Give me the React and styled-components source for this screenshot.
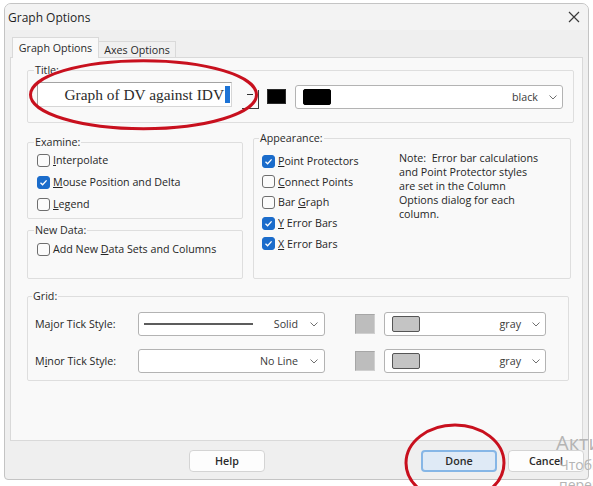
import styled, { createGlobalStyle } from 'styled-components';

const UI = '"Open Sans", "Noto Sans", sans-serif';

const GlobalStyle = createGlobalStyle`
  body {
    margin: 0;
    background: #fff;
  }
`;

function Chevron() {
  return (
    <ChevronSvg width='8' height='5' viewBox='0 0 8 5'>
      <polyline points='0.5,0.5 4,4 7.5,0.5' fill='none' stroke='#707070' strokeWidth='1' />
    </ChevronSvg>
  );
}

function Check({ label, hotkey, checked, rest, compact }) {
  return (
    <CheckRow $compact={compact}>
      <Box $checked={checked}>
        {checked && (
          <svg width='11' height='11' viewBox='0 0 11 11'>
            <polyline points='2.5,5.8 4.6,7.8 8.6,3.4' fill='none' stroke='#fff' strokeWidth='1.3' />
          </svg>
        )}
      </Box>
      <span>
        {label}
        <Key>{hotkey}</Key>
        {rest}
      </span>
    </CheckRow>
  );
}

function ColorCombo({ name, swatch, width }) {
  return (
    <Combo $width={width}>
      <ComboSwatch $color={swatch} />
      <ComboText>{name}</ComboText>
      <Chevron />
    </Combo>
  );
}

function App() {
  return (
    <Screen>
      <GlobalStyle />
      <Window>
        <TitleBar>
          <WindowTitle>Graph Options</WindowTitle>
          <svg width='12' height='12' viewBox='0 0 12 12'>
            <path d='M1 1 L11 11 M11 1 L1 11' stroke='#3a3a3a' strokeWidth='1.2' />
          </svg>
        </TitleBar>

        <Body>
          <TabRow>
            <Tab $active>Graph Options</Tab>
            <Tab>Axes Options</Tab>
          </TabRow>

          <Panel>
            <Group>
              <Legend>Title:</Legend>
              <TitleRow>
                <TitleInput>
                  Graph of DV against IDV
                  <Caret />
                </TitleInput>
                <DropButton>
                  <svg width='6' height='4' viewBox='0 0 6 4'>
                    <path d='M0 0.5 H6' stroke='#333' strokeWidth='1.2' />
                  </svg>
                </DropButton>
                <Swatch $color='#000' $top={7} $h={15} />
                <ColorCombo name='black' swatch='#000' width={271} />
              </TitleRow>
            </Group>

            <Columns>
              <LeftColumn>
                <Group $pad='0 9px 3px'>
                  <Legend>Examine:</Legend>
                  <Check hotkey='I' rest='nterpolate' />
                  <Check hotkey='M' rest='ouse Position and Delta' checked />
                  <Check hotkey='L' rest='egend' />
                </Group>
                <Group $pad='1px 9px 18px' $gap={4}>
                  <Legend>New Data:</Legend>
                  <Check label='Add New ' hotkey='D' rest='ata Sets and Columns' />
                </Group>
              </LeftColumn>

              <Group $pad='6px 8px 0'>
                <Legend>Appearance:</Legend>
                <AppearanceBody>
                  <CheckList>
                    <Check hotkey='P' rest='oint Protectors' checked compact />
                    <Check hotkey='C' rest='onnect Points' compact />
                    <Check label='Bar ' hotkey='G' rest='raph' compact />
                    <Check hotkey='Y' rest=' Error Bars' checked compact />
                    <Check hotkey='X' rest=' Error Bars' checked compact />
                  </CheckList>
                  <Note>
                    {'Note:  Error bar calculations\nand Point Protector styles\nare set in the Column\nOptions dialog for each\ncolumn.'}
                  </Note>
                </AppearanceBody>
              </Group>
            </Columns>

            <Group $pad='9px 0 7px 7px' $gap={10} $right={5}>
              <Legend>Grid:</Legend>
              <GridRows>
                <GridRow>
                  <RowLabel>Major Tick Style:</RowLabel>
                  <LineSelect>
                    <Line />
                    <span>Solid</span>
                    <Chevron />
                  </LineSelect>
                  <Swatch $color='#bdbdbd' $h={20} $w={20} $gray />
                  <ColorCombo name='gray' swatch='#c4c4c4' width={162} />
                </GridRow>
                <GridRow>
                  <RowLabel>
                    M<Key>i</Key>nor Tick Style:
                  </RowLabel>
                  <LineSelect>
                    <span>No Line</span>
                    <Chevron />
                  </LineSelect>
                  <Swatch $color='#bdbdbd' $h={20} $w={20} $gray />
                  <ColorCombo name='gray' swatch='#c4c4c4' width={162} />
                </GridRow>
              </GridRows>
            </Group>
          </Panel>
        </Body>

        <Footer>
          <Button>Help</Button>
          <Button $primary>Done</Button>
          <Button>Cancel</Button>
        </Footer>
      </Window>

      <Annotations width='593' height='486' viewBox='0 0 593 486'>
        <ellipse cx='143.5' cy='94.7' rx='113' ry='34' fill='none' stroke='#c8101e' strokeWidth='3' />
        <ellipse cx='455' cy='463' rx='49' ry='38' fill='none' stroke='#c8101e' strokeWidth='3' />
      </Annotations>

      <Watermark>
        <WatermarkBig>Активация</WatermarkBig>
        <WatermarkSmall>Чтобы</WatermarkSmall>
        <WatermarkSmall>перейдите</WatermarkSmall>
      </Watermark>
    </Screen>
  );
}

const Screen = styled.div`
  position: relative;
  width: 593px;
  height: 486px;
  overflow: hidden;
  background: #fff;
  font-family: ${UI};
  font-size: 10.7px;
  color: #262626;
`;

const Window = styled.div`
  box-sizing: border-box;
  width: 585px;
  height: 477px;
  margin: 3px 0 0 4px;
  display: flex;
  flex-direction: column;
  background: #efefef;
  border: 1px solid #c4c4c4;
  border-radius: 7px 7px 4px 4px;
  overflow: hidden;
`;

const TitleBar = styled.div`
  height: 26px;
  flex: none;
  display: flex;
  align-items: center;
  justify-content: space-between;
  padding: 0 8px 0 3px;
  background: #f3f3f3;
`;

const WindowTitle = styled.span`
  font-size: 12px;
  color: #1f1f1f;
`;

const Body = styled.div`
  padding: 7px 5px 0;
`;

const TabRow = styled.div`
  display: flex;
  align-items: flex-end;
  height: 21px;
  padding-left: 2px;
  margin-bottom: -1px;
`;

const Tab = styled.div`
  box-sizing: border-box;
  position: relative;
  z-index: 1;
  display: flex;
  align-items: center;
  justify-content: center;
  width: ${(p) => (p.$active ? 87 : 77)}px;
  height: ${(p) => (p.$active ? 21 : 16)}px;
  margin-bottom: ${(p) => (p.$active ? 0 : 1)}px;
  background: ${(p) => (p.$active ? '#f9f9f9' : '#f0f0f0')};
  border: 1px solid #d9d9d9;
  border-bottom: none;
  border-left: ${(p) => (p.$active ? '1px solid #d9d9d9' : 'none')};
  color: #2a2a2a;
`;

const Panel = styled.div`
  box-sizing: border-box;
  height: 384px;
  padding: 5px 8px 0 16px;
  background: #f9f9f9;
  border: 1px solid #d9d9d9;
`;

const Group = styled.fieldset`
  min-width: 0;
  margin: ${(p) => p.$gap || 0}px ${(p) => p.$right || 0}px 0 0;
  padding: ${(p) => p.$pad || '5px 10px 13px 9px'};
  border: 1px solid #dedede;
  border-radius: 2px;
`;

const Legend = styled.legend`
  margin-left: -3px;
  padding: 0 1px;
  line-height: 14px;
  color: #2a2a2a;
`;

const TitleRow = styled.div`
  display: flex;
  align-items: flex-start;
`;

const TitleInput = styled.div`
  box-sizing: border-box;
  width: 197px;
  height: 25px;
  display: flex;
  align-items: center;
  justify-content: flex-end;
  padding-right: 1px;
  background: #fff;
  border: 1px solid #a3a3a3;
  border-right-color: #d6d6d6;
  border-bottom-color: #d6d6d6;
  font-family: "Liberation Serif", "DejaVu Serif", serif;
  font-size: 15.4px;
  color: #2b2b2b;
`;

const Caret = styled.span`
  width: 5px;
  height: 17px;
  margin-left: 1px;
  background: #1c73d6;
`;

const DropButton = styled.div`
  box-sizing: border-box;
  width: 17px;
  height: 19px;
  margin: 8px 0 0 10px;
  display: flex;
  justify-content: center;
  padding-top: 4px;
  border-right: 1px solid #3c3c3c;
  border-bottom: 1px solid #3c3c3c;
`;

const Swatch = styled.div`
  box-sizing: border-box;
  width: ${(p) => p.$w || 19}px;
  height: ${(p) => p.$h}px;
  margin: ${(p) => p.$top || 0}px 9px 0 ${(p) => (p.$gray ? 30 : 8)}px;
  background: ${(p) => p.$color};
  border: 1px solid ${(p) => (p.$gray ? '#a6a6a6' : '#2b2b2b')};
  border-right-color: ${(p) => (p.$gray ? '#d0d0d0' : '#2b2b2b')};
  border-bottom-color: ${(p) => (p.$gray ? '#d0d0d0' : '#2b2b2b')};
`;

const Combo = styled.div`
  box-sizing: border-box;
  width: ${(p) => p.$width}px;
  height: 24px;
  margin-top: ${(p) => (p.$width > 200 ? 3 : 0)}px;
  display: flex;
  align-items: center;
  padding: 0 5px 0 7px;
  background: #fff;
  border: 1px solid #b3b3b3;
  border-radius: 3px;
`;

const ComboSwatch = styled.span`
  box-sizing: border-box;
  width: 28px;
  height: 16px;
  background: ${(p) => p.$color};
  border: 1px solid ${(p) => (p.$color === '#000' ? '#000' : '#555')};
  border-radius: 2px;
`;

const ComboText = styled.span`
  margin-left: auto;
  margin-right: 11px;
  color: #3a3a3a;
`;

const ChevronSvg = styled.svg`
  flex: none;
`;

const Columns = styled.div`
  display: grid;
  grid-template-columns: 216px 318px;
  column-gap: 10px;
  margin-top: 8px;
`;

const LeftColumn = styled.div`
  display: flex;
  flex-direction: column;
  padding-top: 4px;
`;

const CheckRow = styled.div`
  display: flex;
  align-items: center;
  gap: 3px;
  height: ${(p) => (p.$compact ? 20.6 : 22)}px;
`;

const CheckList = styled.div`
  display: flex;
  flex-direction: column;
`;

const Box = styled.span`
  box-sizing: border-box;
  width: 13px;
  height: 13px;
  flex: none;
  display: flex;
  align-items: center;
  justify-content: center;
  border-radius: 3px;
  background: ${(p) => (p.$checked ? '#1b6ccb' : '#fbfbfb')};
  border: 1px solid ${(p) => (p.$checked ? '#1b6ccb' : '#6e6e6e')};
`;

const Key = styled.u`
  text-underline-offset: 1px;
`;

const AppearanceBody = styled.div`
  display: grid;
  grid-template-columns: 137px 1fr;
`;

const Note = styled.div`
  margin-top: 0;
  white-space: pre;
  line-height: 14px;
  color: #262626;
`;

const GridRows = styled.div`
  display: flex;
  flex-direction: column;
  gap: 13px;
`;

const GridRow = styled.div`
  display: flex;
  align-items: center;
  height: 24px;
`;

const RowLabel = styled.span`
  width: 103px;
  flex: none;
`;

const LineSelect = styled.div`
  box-sizing: border-box;
  width: 187px;
  height: 24px;
  display: flex;
  align-items: center;
  justify-content: flex-end;
  gap: 12px;
  padding: 0 6px 0 5px;
  background: #fff;
  border: 1px solid #b3b3b3;
  border-radius: 3px;
  color: #3a3a3a;
`;

const Line = styled.span`
  width: 109px;
  height: 2px;
  margin-right: auto;
  background: #5c5c5c;
`;

const Footer = styled.div`
  display: flex;
  align-items: flex-start;
  padding: 9px 4px 0 184px;
`;

const Button = styled.button`
  box-sizing: border-box;
  width: 76px;
  height: 22px;
  margin-left: ${(p) => (p.$primary ? 'auto' : '0')};
  margin-right: ${(p) => (p.$primary ? 11 : 0)}px;
  padding: 0;
  font-family: ${UI};
  font-size: 10.7px;
  font-weight: 600;
  color: #2a2a2a;
  background: ${(p) => (p.$primary ? '#dfeaf6' : '#fdfdfd')};
  border: ${(p) => (p.$primary ? '2px solid #86b6e6' : '1px solid #d4d4d4')};
  border-radius: 4px;
`;

const Annotations = styled.svg`
  position: absolute;
  left: 0;
  top: 0;
  pointer-events: none;
`;

const Watermark = styled.div`
  position: absolute;
  left: 556px;
  top: 430px;
  display: flex;
  flex-direction: column;
  white-space: nowrap;
  color: #b4b4b4;
  pointer-events: none;
`;

const WatermarkBig = styled.span`
  font-size: 20px;
  line-height: 25px;
`;

const WatermarkSmall = styled.span`
  margin-left: 3px;
  font-size: 14px;
  line-height: 20px;
`;

export default App;
